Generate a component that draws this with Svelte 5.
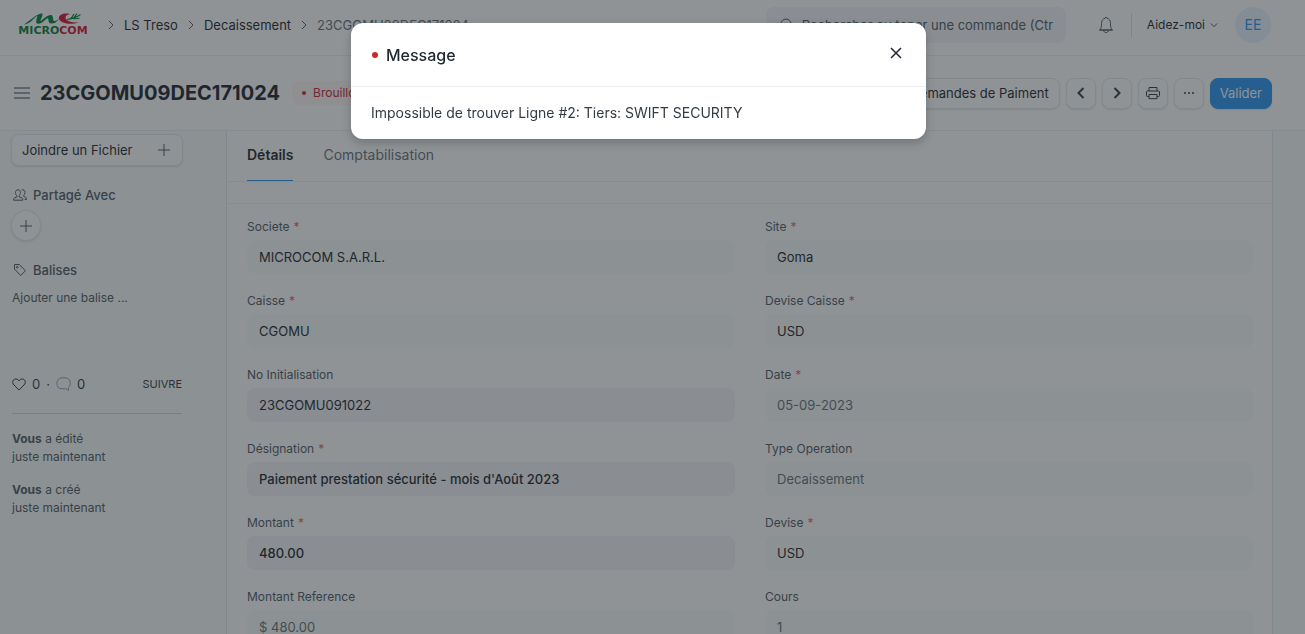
<script lang="ts">
  const rows = [
    [
      { id: 'societe', label: 'Societe', req: true, value: 'MICROCOM S.A.R.L.', kind: 'locked' },
      { id: 'site', label: 'Site', req: true, value: 'Goma', kind: 'locked' }
    ],
    [
      { id: 'caisse', label: 'Caisse', req: true, value: 'CGOMU', kind: 'locked' },
      { id: 'devise-caisse', label: 'Devise Caisse', req: true, value: 'USD', kind: 'locked' }
    ],
    [
      { id: 'initialisation', label: 'No Initialisation', req: false, value: '23CGOMU091022', kind: 'edit' },
      { id: 'date', label: 'Date', req: true, value: '05-09-2023', kind: 'locked muted' }
    ],
    [
      { id: 'designation', label: 'Désignation', req: true, value: "Paiement prestation sécurité - mois d'Août 2023", kind: 'edit strong' },
      { id: 'type', label: 'Type Operation', req: false, value: 'Decaissement', kind: 'locked muted' }
    ],
    [
      { id: 'montant', label: 'Montant', req: true, value: '480.00', kind: 'edit strong' },
      { id: 'devise', label: 'Devise', req: true, value: 'USD', kind: 'locked' }
    ],
    [
      { id: 'montant-ref', label: 'Montant Reference', req: false, value: '$ 480.00', kind: 'locked muted' },
      { id: 'cours', label: 'Cours', req: false, value: '1', kind: 'locked muted' }
    ]
  ];
  const fields = rows.flat();
  const activity = ['a édité', 'a créé'];
  let open = $state(true);
</script>

{#snippet chevron()}
  <svg class="chev" viewBox="0 0 6 10" width="6" height="10"><path d="M1 1l4 4-4 4" /></svg>
{/snippet}

<div class="page">
  <header class="navbar">
    <a class="logo" href="#home" aria-label="Microcom">
      <svg viewBox="0 0 78 24" width="78" height="24">
        <path d="M10 11.500C17 7 21 2 27 .5c4-.8-1 6.500-.5 7.500C28 8 32 2 37 2c3 0 1 6 3.500 6 2 0 3.500-1.500 5-2.500C43 8.500 41 10.500 37.500 10.500c-4.500 0-2-5-4-5.200C31 6 29 10.800 24 10.800c-3.500 0-1-6-.5-8C20 4.500 17 11 10 11.500z" fill="#06803a" />
        <path d="M56 1c-7-1.500-12 1.500-11 5 1.500 4 11 6.500 20 3.500-7 .5-13-1.500-13.500-4.500C51.300 3 53 1.500 56 1z" fill="#d9152f" />
        <path d="M53 6.500c5-.5 9-2 13.500-5M56 6c1.500-1 3-3 4-5M59 5.500c1.500-1 2.500-3 4-5M59 5.500c2.500.5 4 .5 6.500-.5" stroke="#06803a" stroke-width="1.200" fill="none" />
        <text x="39" y="21" text-anchor="middle" font-family="DejaVu Sans" font-weight="700" font-size="11"><tspan fill="#06803a">MICRO</tspan><tspan fill="#d9152f">COM</tspan></text>
      </svg>
    </a>
    <nav class="crumbs" aria-label="Fil d'Ariane">
      {@render chevron()}<a href="#treso">LS Treso</a>
      {@render chevron()}<a href="#decaissement">Decaissement</a>
      {@render chevron()}<a class="last" href="#doc">23CGOMU09DEC171024</a>
    </nav>
    <div class="search">
      <svg viewBox="0 0 14 14" width="14" height="14"><circle cx="6" cy="6" r="5" /><path d="M10 10l3 3" /></svg>
      <input type="text" aria-label="Recherche" placeholder="Rechercher ou taper une commande (Ctrl + G)" />
    </div>
    <button class="bell" aria-label="Notifications">
      <svg viewBox="0 0 16 18" width="16" height="18"><path d="M2 14c1-1.500 1.500-3 1.500-6.500C3.500 4.500 5 2.700 7 2.300a1 1 0 0 1 2 0c2 .4 3.500 2.200 3.500 5.200 0 3.500.5 5 1.500 6.500zM1 14h14M5.500 14.300c.5 3 4.500 3 5 0" /></svg>
    </button>
    <span class="divider"></span>
    <button class="help">Aidez-moi <svg viewBox="0 0 10 6" width="8" height="6"><path d="M1 1l4 4 4-4" /></svg></button>
    <button class="avatar" aria-label="Profil">EE</button>
  </header>

  <div class="head">
    <button class="menu" aria-label="Menu"><svg viewBox="0 0 16 14" width="16" height="14"><path d="M0 2h16M0 7h16M0 12h16" /></svg></button>
    <h1>23CGOMU09DEC171024</h1>
    <span class="status"><i></i>Brouillon</span>
    <div class="actions">
      <button class="btn">Demandes de Paiment</button>
      <button class="btn icon" aria-label="Précédent"><svg viewBox="0 0 16 16" width="16" height="16"><path d="M10.500 3L5.500 8l5 5" /></svg></button>
      <button class="btn icon" aria-label="Suivant"><svg viewBox="0 0 16 16" width="16" height="16"><path d="M5.500 3l5 5-5 5" /></svg></button>
      <button class="btn icon print" aria-label="Imprimer"><svg viewBox="0 0 16 16" width="16" height="16"><path d="M4 6V2.500h8V6M4 11.500H2.500A1 1 0 0 1 1.500 10.500V7a1 1 0 0 1 1-1h11a1 1 0 0 1 1 1v3.500a1 1 0 0 1-1 1H12M4 9.500h8v4.200H4z" /></svg></button>
      <button class="btn icon" aria-label="Plus"><svg class="dots" viewBox="0 0 16 16" width="16" height="16"><circle cx="4" cy="8" r="1" /><circle cx="8" cy="8" r="1" /><circle cx="12" cy="8" r="1" /></svg></button>
      <button class="btn primary">Valider</button>
    </div>
  </div>

  <div class="body">
    <aside>
      <button class="btn attach">Joindre un Fichier <svg viewBox="0 0 12 12" width="12" height="12"><path d="M6 0v12M0 6h12" /></svg></button>
      <h2>
        <svg viewBox="0 0 14 12" width="14" height="12"><path d="M5 .8c1.700 0 2.500 1.200 2.500 2.700S6.500 6.500 6 7v.8l3 1.200c.6.3.8.8.8 2.200H.6C.6 9.800.8 9.300 1.400 9L4 7.800V7c-.7-.5-1.500-2-1.500-3.500S3.300.8 5 .8zM8.500 1c2-.8 3.500.5 3.500 2.500 0 1.500-.8 2.500-1.400 3v.8l2 .9c.7.3.9 1 .9 2.200h-2" /></svg>
        Partagé Avec
      </h2>
      <button class="add" aria-label="Ajouter"><svg viewBox="0 0 12 12" width="12" height="12"><path d="M6 0v12M0 6h12" /></svg></button>
      <h2>
        <svg viewBox="0 0 14 14" width="14" height="14"><path d="M1.500 1.500h4.700l6.300 6.200-4.800 4.800-6.200-6.300z" /><circle cx="4.200" cy="4.200" r=".8" /></svg>
        Balises
      </h2>
      <a class="add-tag" href="#tag">Ajouter une balise ...</a>
      <div class="stats">
        <button aria-label="Aimer"><svg viewBox="0 0 14 13" width="14" height="13"><path d="M7 12L2 7C-.5 4.300 1 1 3.800 1 5.500 1 6.500 2 7 3c.5-1 1.500-2 3.200-2C13 1 14.500 4.300 12 7z" /></svg></button>
        <span>0</span><span>·</span>
        <button class="comment" aria-label="Commentaires"><svg viewBox="0 0 15 14" width="15" height="14"><path d="M12.500 10.500V13.300l-2.700-1.500H6C2.500 11.800.8 9.300.8 6.300S3 .8 6 .8h3c3 0 5.200 2 5.200 5 0 2-.5 3.500-1.700 4.700z" /></svg></button>
        <span>0</span>
        <button class="follow">SUIVRE</button>
      </div>
      {#each activity as act}
        <p><b>Vous</b> {act}<br />juste maintenant</p>
      {/each}
    </aside>

    <main>
      <div class="tabs" role="tablist">
        <button role="tab" aria-selected="true" class="active">Détails</button>
        <button role="tab" aria-selected="false">Comptabilisation</button>
      </div>
      <div class="spacer"></div>
      <form class="fields">
        {#each fields as f}
          <div class="field">
            <label for={f.id}>{f.label}{#if f.req}<em>*</em>{/if}</label>
            <input id={f.id} class={f.kind} value={f.value} readonly={f.kind.includes('locked')} />
          </div>
        {/each}
      </form>
    </main>
  </div>

  {#if open}
    <div class="backdrop">
      <div class="modal" role="dialog" aria-labelledby="dialog-title">
        <div class="modal-head">
          <i></i>
          <h4 id="dialog-title">Message</h4>
          <button aria-label="Fermer" onclick={() => (open = false)}><svg viewBox="0 0 12 12" width="12" height="12"><path d="M1 1l10 10M11 1L1 11" /></svg></button>
        </div>
        <div class="modal-body">Impossible de trouver Ligne #2: Tiers: SWIFT SECURITY</div>
      </div>
    </div>
  {/if}
</div>

<style>
  :global(body) { margin: 0; }
  .page, .page :global(*) { box-sizing: border-box; }
  .page {
    height: 100vh; overflow: hidden; display: flex; flex-direction: column;
    font: 13px/18px Inter, sans-serif; color: #1f272e; background: #f9fafa;
  }
  button, input { font: inherit; color: inherit; background: none; border: 0; padding: 0; margin: 0; }
  a { color: inherit; text-decoration: none; }
  svg { fill: none; stroke: currentColor; flex: none; display: block; }
  text, tspan { stroke: none; }
  .logo svg { stroke: none; }
  h1, h2, h4, p { margin: 0; }

  .navbar {
    flex: none; height: 56px; padding: 0 34px 5px 14px; background: #fff;
    border-bottom: 1px solid #ebeef0; display: flex; align-items: center;
  }
  .crumbs { display: flex; align-items: center; gap: 10px; margin-left: 16px; }
  .crumbs .last { color: #687178; }
  .chev { stroke: #4c5a67; }
  .search {
    width: 300px; height: 36px; margin-left: auto; padding: 0 12px 0 14px; border-radius: 8px;
    background: #f4f5f6; display: flex; align-items: center; gap: 8px; color: #505a62;
  }
  .search input { flex: 1; min-width: 0; outline: 0; }
  .search input::placeholder { color: #505a62; opacity: 1; }
  .bell { margin-left: 32px; color: #505a62; }
  .divider { width: 1px; height: 24px; background: #dce0e3; margin: 0 15px 0 17px; }
  .help { display: flex; align-items: center; gap: 5px; font-size: 12px; }
  .avatar {
    width: 36px; height: 36px; margin-left: 17px; border-radius: 50%;
    background: #e9f3fc; color: #2d95f0; font-size: 14px;
  }

  .head {
    flex: none; height: 75px; padding: 0 33px 0 14px; background: #fff;
    border-bottom: 1px solid #ebeef0; display: flex; align-items: center;
  }
  .menu { color: #98a1a9; }
  .menu svg { stroke-width: 2; }
  h1 { margin-left: 10px; font-size: 20px; line-height: 28px; font-weight: 700; }
  .status {
    margin-left: 12px; height: 24px; padding: 0 10px; border-radius: 8px; background: #fff5f5;
    color: #cb2929; font-size: 12px; display: flex; align-items: center; gap: 7px;
  }
  i { width: 4px; height: 4px; border-radius: 50%; background: #cb2929; flex: none; }
  .actions { margin-left: auto; display: flex; gap: 6px; }
  .btn {
    height: 31px; padding: 0 10px; border-radius: 8px; background: #fff;
    border: 1px solid #e6e9eb; box-shadow: 0 1px 2px rgba(0, 0, 0, .1); white-space: nowrap;
  }
  .icon { width: 30px; padding: 0 6px; }
  .icon svg { stroke-width: 2; color: #333c44; }
  .print svg { stroke-width: 1; }
  .icon .dots { fill: currentColor; stroke: none; }
  .primary { padding: 0 9px; background: #2d95f0; border-color: #2d95f0; color: #fff; }

  .body { flex: 1; min-height: 0; display: flex; padding-right: 32px; }
  aside { flex: none; width: 226px; padding: 3px 44px 0 12px; color: #505a62; font-size: 12px; }
  .attach {
    width: 172px; height: 32px; margin-left: -1px; font-size: 13px; color: #1f272e;
    display: flex; align-items: center; justify-content: space-between; padding-right: 12px;
  }
  .attach svg, .add svg { color: #505a62; }
  h2 {
    display: flex; align-items: center; gap: 6px; margin-top: 20px; padding-left: 1px;
    font-size: 13px; line-height: 18px; font-weight: 500;
  }
  .add {
    width: 30px; height: 31px; margin-top: 6px; margin-left: -1px; border-radius: 50%; background: #fff;
    border: 1px solid #e6e9eb; box-shadow: 0 1px 2px rgba(0, 0, 0, .1); display: grid; place-items: center;
  }
  .add-tag { display: block; margin-top: 10px; }
  .stats {
    height: 39px; margin-top: 68px; padding-bottom: 20px; display: flex; align-items: center; gap: 6px;
    border-bottom: 1px solid #d0d5d9; font-size: 13px; color: #333c44;
  }
  .comment { color: #98a1a9; }
  .follow { margin-left: auto; font-size: 11px; }
  p { margin-top: 15px; }
  .stats + p { margin-top: 16px; }
  b { font-weight: 700; }

  main { flex: 1; min-width: 0; background: #fff; border-left: 1px solid #e2e6e9; border-right: 1px solid #e2e6e9; }
  .tabs { height: 51px; padding: 0 20px; display: flex; gap: 30px; border-bottom: 1px solid #ebeef0; }
  .tabs button { font-size: 14px; padding-bottom: 2px; color: #687178; border-bottom: 1px solid transparent; }
  .tabs .active { font-weight: 600; color: #1f272e; border-color: #2d95f0; }
  .spacer { height: 22px; border-bottom: 1px solid #f0f2f4; }
  .fields { display: grid; grid-template-columns: 1fr 1fr; column-gap: 30px; row-gap: 18px; padding: 14px 19px 14px 20px; }
  .field { display: flex; flex-direction: column; gap: 4px; }
  label { font-size: 12px; color: #505a62; }
  em { font-style: normal; color: #f06060; margin-left: 4px; }
  .field input { height: 34px; padding: 0 12px; border-radius: 8px; background: #f9fafa; outline: 0; min-width: 0; }
  .field .locked { padding-bottom: 1px; }
  .field .edit { background: #f4f5f6; }
  .field .muted { color: #687178; }
  .field .strong { font-weight: 500; }

  .backdrop {
    position: fixed; inset: 0; padding: 23px 28px 0 0; background: rgba(31, 39, 46, .5);
    display: flex; justify-content: center; align-items: flex-start;
  }
  .modal {
    width: 575px; max-width: 100%; background: #fff; border-radius: 12px;
    box-shadow: 0 4px 10px rgba(0, 0, 0, .2);
  }
  .modal-head { height: 64px; padding: 0 24px 0 21px; display: flex; align-items: center; border-bottom: 1px solid #ebeef0; }
  .modal-head i { width: 6px; height: 6px; margin-right: 8px; }
  h4 { font-size: 16px; line-height: 24px; font-weight: 500; }
  .modal-head button { margin-left: auto; margin-bottom: 4px; }
  .modal-head svg { stroke-width: 1.5; color: #1f272e; }
  .modal-body { padding: 17px 20px; font-size: 14px; color: #333c44; }
</style>
